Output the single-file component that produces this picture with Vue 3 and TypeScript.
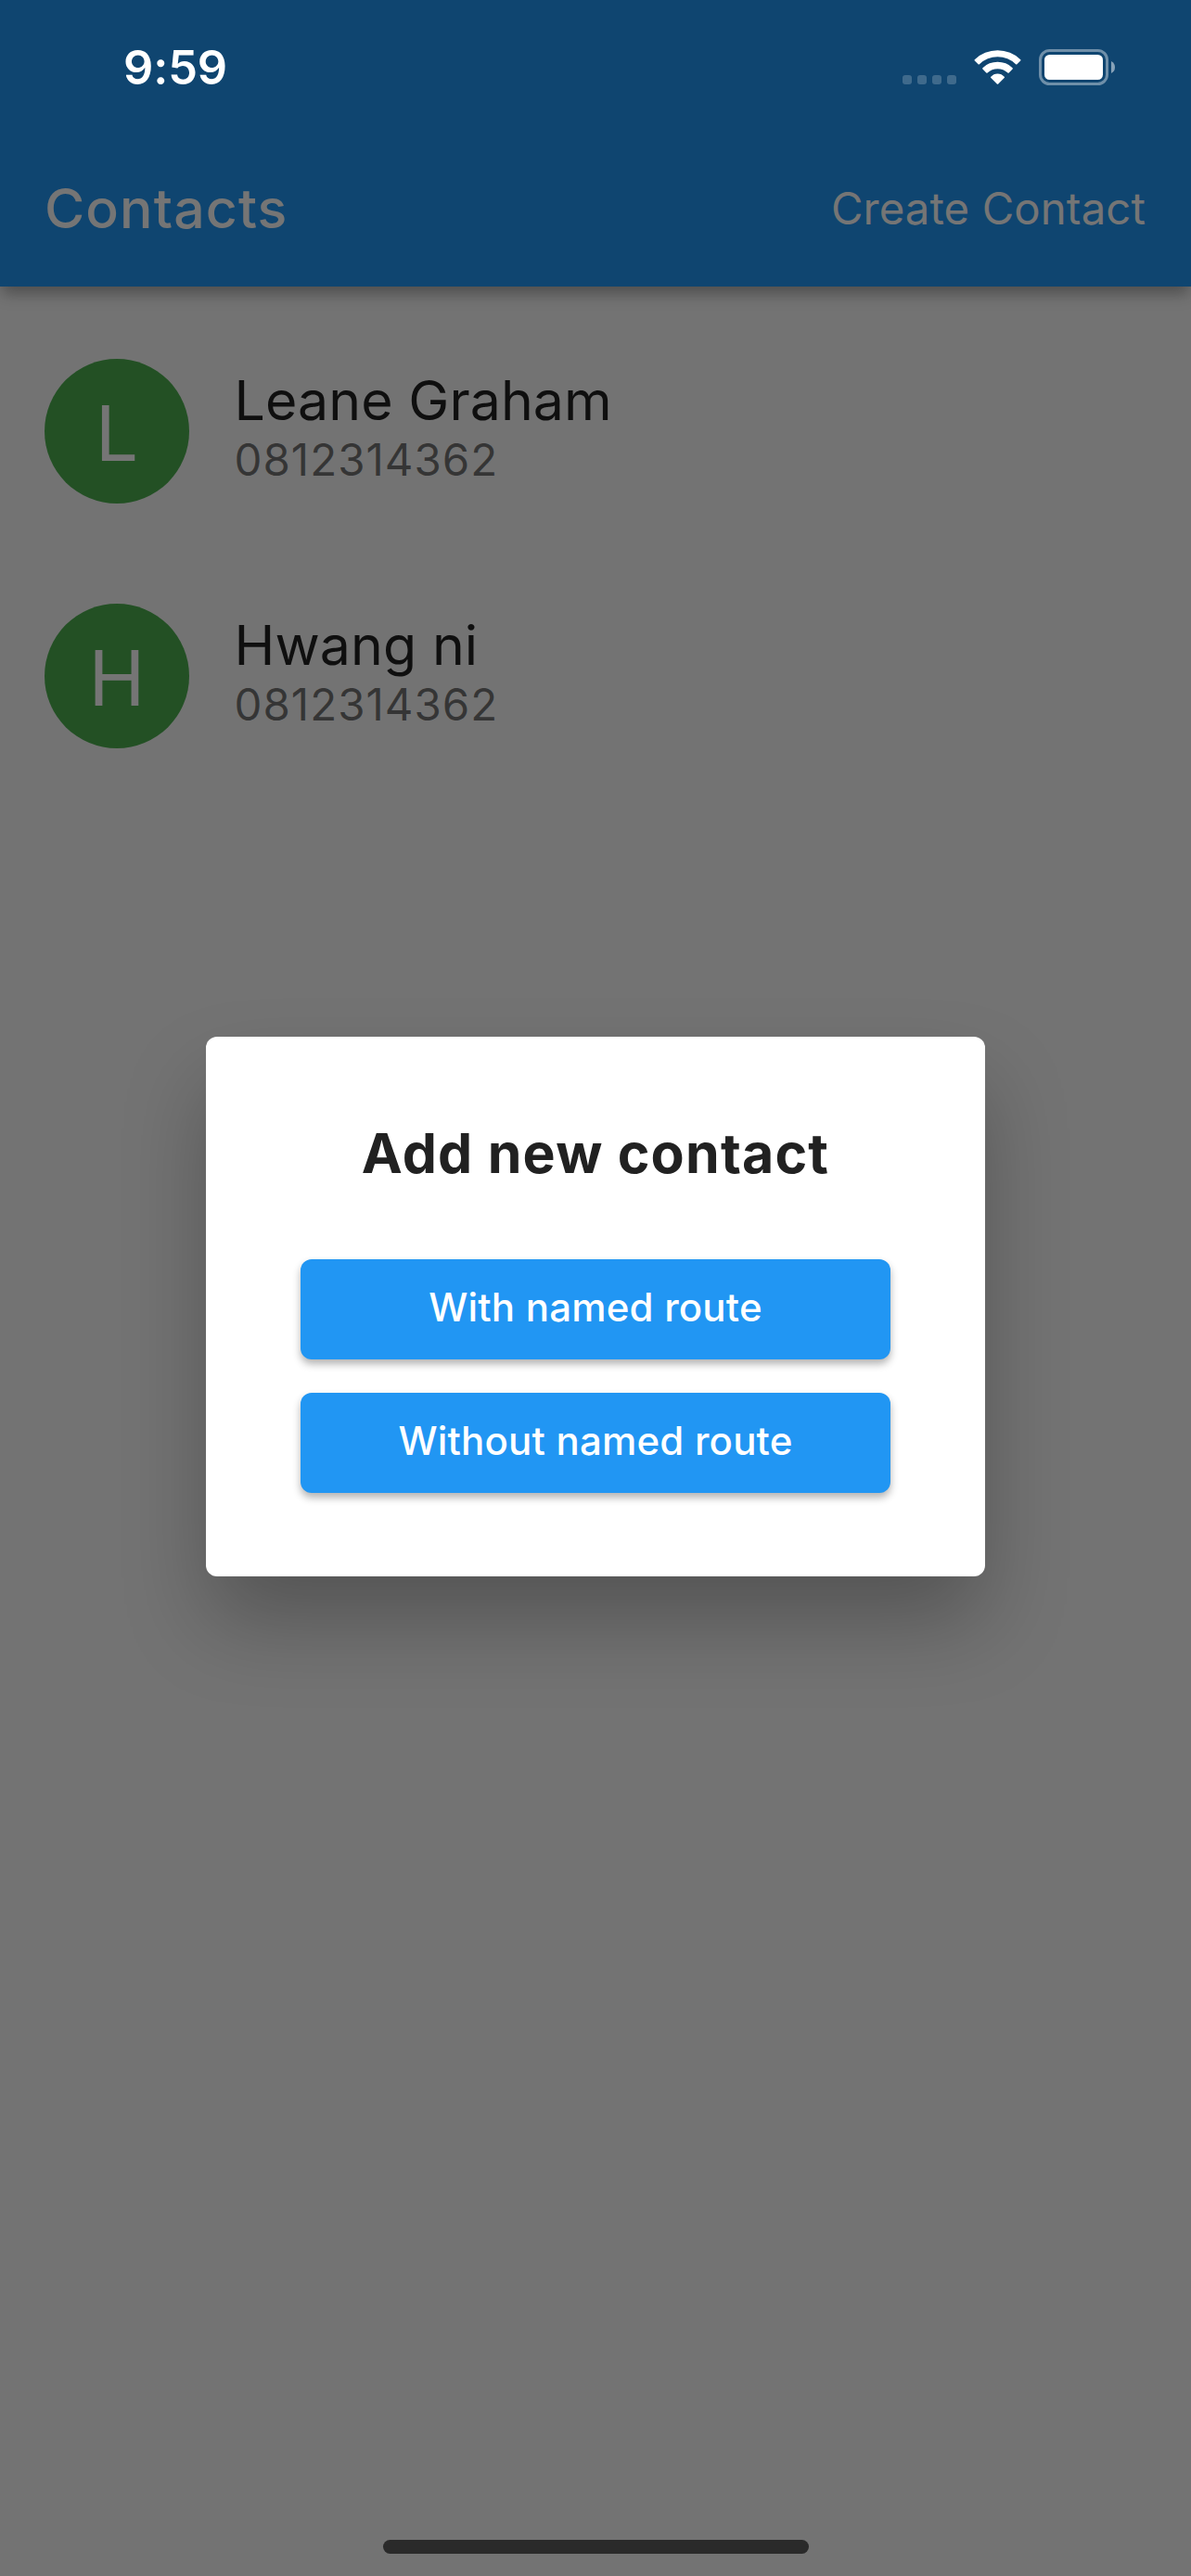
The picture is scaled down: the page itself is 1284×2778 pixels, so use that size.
<script setup lang="ts">
interface Contact {
  name: string
  phone: string
}

const contacts: Contact[] = [
  { name: 'Leane Graham', phone: '0812314362' },
  { name: 'Hwang ni', phone: '0812314362' },
]

const routeOptions: string[] = ['With named route', 'Without named route']
</script>

<template>
  <div class="screen">
    <header class="app-bar">
      <h1 class="app-title">Contacts</h1>
      <span class="app-action">Create Contact</span>
    </header>

    <ul class="contacts">
      <li v-for="contact in contacts" :key="contact.name" class="contact">
        <div class="avatar">{{ contact.name.charAt(0) }}</div>
        <div class="details">
          <div class="name">{{ contact.name }}</div>
          <div class="phone">{{ contact.phone }}</div>
        </div>
      </li>
    </ul>

    <div class="barrier">
      <section class="dialog" role="dialog">
        <h2 class="dialog-title">Add new contact</h2>
        <div class="actions">
          <button v-for="label in routeOptions" :key="label" class="action" type="button">{{ label }}</button>
        </div>
      </section>
    </div>

    <div class="system">
      <div class="status-bar">
        <span class="time">9:59</span>
        <div class="indicators">
          <div class="signal"><i v-for="n in 4" :key="n" /></div>
          <svg class="wifi" width="51" height="37" viewBox="0 0 51 37" fill="#fff">
            <path d="M.8 10.2A35.5 35.5 0 0 1 50.2 10.2Q50.8 10.9 50.2 11.5L46.4 15.2Q45.7 15.8 45.1 15.2A28 28 0 0 0 5.9 15.2Q5.3 15.8 4.6 15.2L.8 11.5Q.2 10.9 .8 10.2Z" />
            <path d="M9.4 19.2A23 23 0 0 1 41.6 19.2Q42.2 19.9 41.6 20.5L37.7 24.5Q37 25.1 36.4 24.6A16 16 0 0 0 14.6 24.6Q14 25.1 13.3 24.5L9.4 20.5Q8.8 19.9 9.4 19.2Z" />
            <path d="M18.3 28.8A9.3 9.3 0 0 1 32.7 28.8Q33.3 29.4 32.7 30L26.2 36.5Q25.5 37.2 24.8 36.5L18.3 30Q17.7 29.4 18.3 28.8Z" />
          </svg>
          <svg class="battery" width="82" height="39" viewBox="0 0 82 39">
            <rect x="1.5" y="1.5" width="72" height="36" rx="10" fill="none" stroke="#fff" stroke-opacity=".4" stroke-width="3" />
            <path d="M78 13Q82 15 82 19.5Q82 24 78 26Z" fill="#fff" fill-opacity=".5" />
            <rect x="6" y="6" width="63" height="27" rx="5.5" fill="#fff" />
          </svg>
        </div>
      </div>
      <div class="home-indicator" />
    </div>
  </div>
</template>

<style>
body {
  margin: 0;
}
</style>

<style scoped>
.screen {
  position: relative;
  display: flex;
  flex-direction: column;
  width: 1284px;
  height: 2778px;
  overflow: hidden;
  background: #fafafa;
  font-family: Inter, 'Liberation Sans', sans-serif;
}

.app-bar {
  display: flex;
  align-items: center;
  justify-content: space-between;
  box-sizing: border-box;
  height: 309px;
  padding: 141px 49px 0 48px;
  background: #2196f3;
  color: #fff;
  box-shadow: 0 9px 16px -2px rgba(0, 0, 0, 0.34);
}

.app-title {
  margin: 0;
  font-size: 59px;
  font-weight: 500;
  line-height: 70px;
  letter-spacing: 1.1px;
}

.app-action {
  font-size: 47.3px;
  line-height: 56px;
  letter-spacing: 0.1px;
}

.contacts {
  display: flex;
  flex-direction: column;
  gap: 108px;
  margin: 0;
  padding: 78px 48px 0;
  list-style: none;
}

.contact {
  display: flex;
  gap: 48.5px;
  height: 156px;
}

.avatar {
  box-sizing: border-box;
  width: 156px;
  height: 156px;
  padding-top: 4px;
  border-radius: 50%;
  background: #4caf50;
  color: #fff;
  font-size: 82px;
  line-height: 154px;
  text-align: center;
}

.details {
  padding-top: 12px;
}

.name {
  color: rgba(0, 0, 0, 0.87);
  font-size: 59px;
  line-height: 66px;
  letter-spacing: 0.08px;
}

.phone {
  color: rgba(0, 0, 0, 0.54);
  font-size: 47.5px;
  line-height: 62px;
  letter-spacing: 1px;
}

.barrier {
  position: absolute;
  inset: 0;
  display: flex;
  align-items: center;
  justify-content: center;
  padding: 141px 0 102px;
  background: rgba(0, 0, 0, 0.54);
}

.dialog {
  box-sizing: border-box;
  width: 840px;
  height: 582px;
  padding: 90px 102px 0;
  border-radius: 12px;
  background: #fff;
  box-shadow: 0 50px 92px -4px rgba(0, 0, 0, 0.27);
}

.dialog-title {
  margin: 0 0 78px;
  color: #212121;
  font-size: 59px;
  font-weight: 700;
  line-height: 72px;
  letter-spacing: 1.2px;
  text-align: center;
}

.actions {
  display: flex;
  flex-direction: column;
  gap: 36px;
}

.action {
  height: 108px;
  padding: 0 0 3px;
  border: 0;
  border-radius: 12px;
  background: #2196f3;
  box-shadow: 0 5px 9px rgba(0, 0, 0, 0.3);
  color: #fff;
  font-family: inherit;
  font-size: 42px;
  font-weight: 500;
  line-height: 50px;
  letter-spacing: 0.2px;
}

.system {
  position: absolute;
  inset: 0;
  display: flex;
  flex-direction: column;
  justify-content: space-between;
  align-items: center;
  padding-bottom: 24px;
}

.status-bar {
  display: flex;
  align-items: center;
  justify-content: space-between;
  align-self: stretch;
  height: 145px;
  padding: 0 82px 0 133px;
}

.time {
  color: #fff;
  font-size: 50.5px;
  font-weight: 600;
  line-height: 60px;
  letter-spacing: -0.1px;
}

.indicators {
  display: flex;
  align-items: center;
}

.signal {
  display: flex;
  gap: 6px;
  padding-top: 27px;
  margin-right: 19px;
}

.signal i {
  width: 10px;
  height: 10px;
  border-radius: 3px;
  background: rgba(255, 255, 255, 0.2);
}

.wifi {
  margin-right: 19px;
}

.home-indicator {
  width: 459px;
  height: 15px;
  border-radius: 8px;
  background: #2a2a2a;
}
</style>
